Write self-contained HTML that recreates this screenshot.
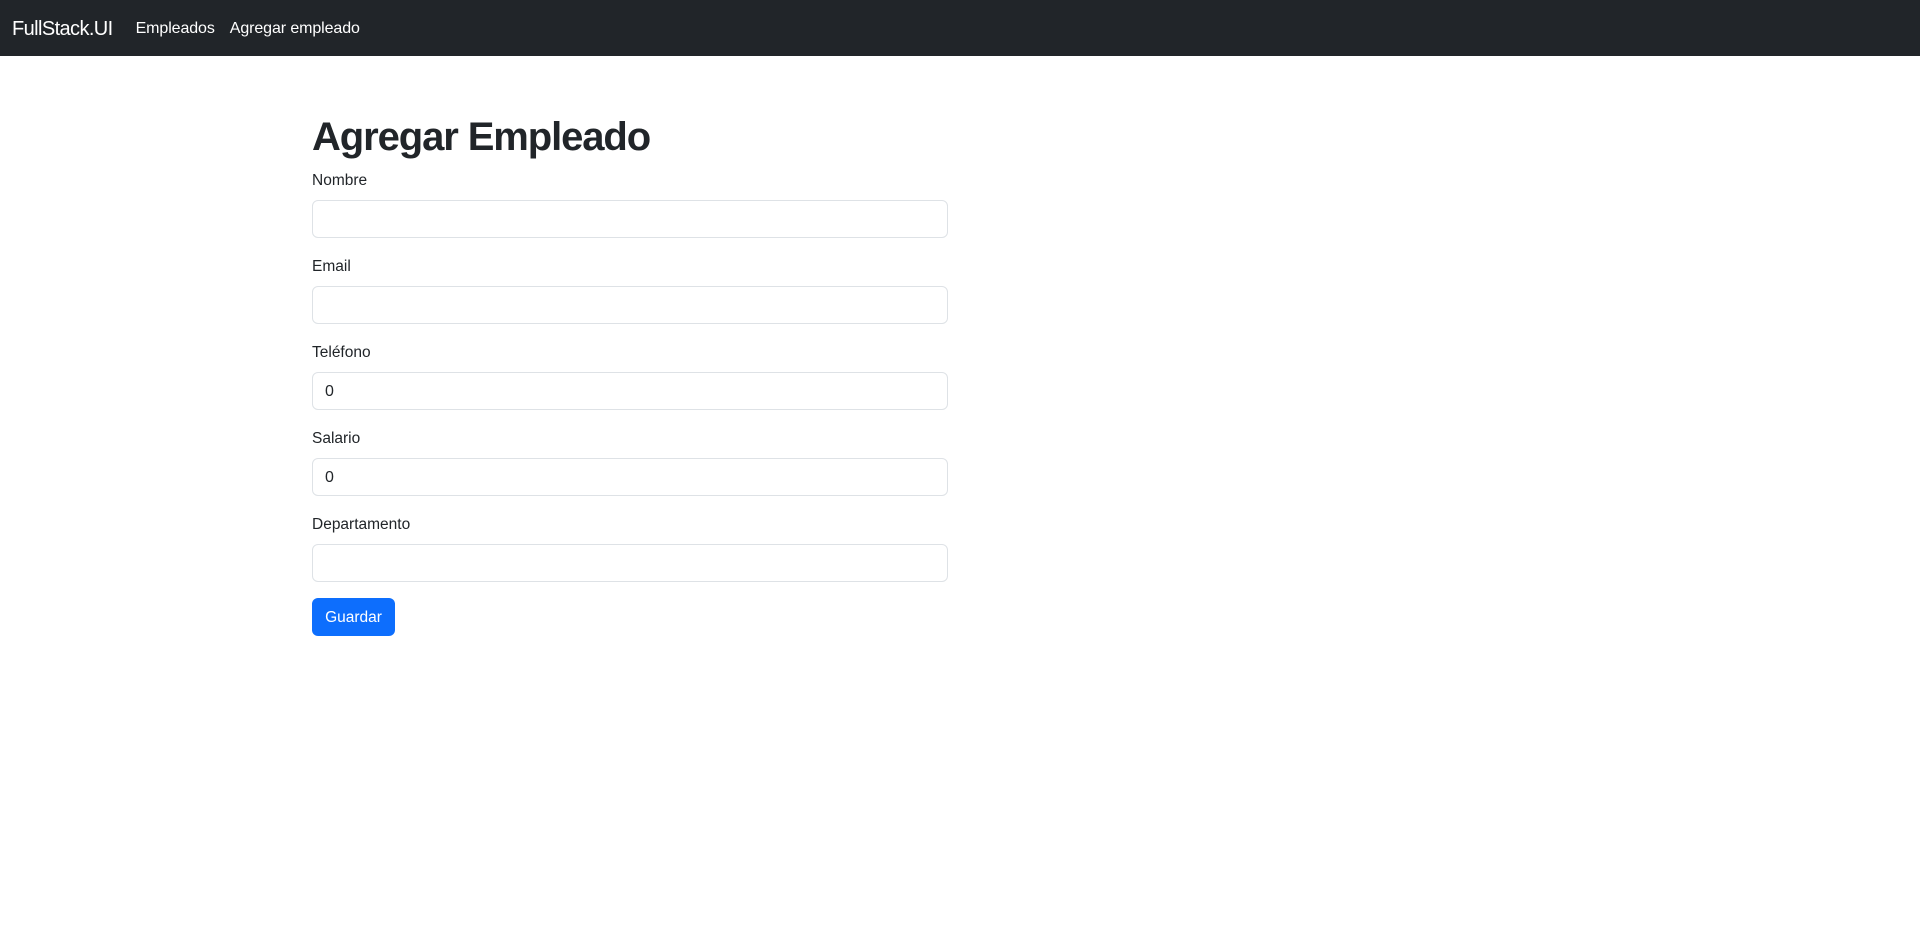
<!DOCTYPE html>
<html><head><meta charset="utf-8"><style>
*{box-sizing:border-box;margin:0;padding:0}
body{font-family:"Liberation Sans",sans-serif;font-size:16px;line-height:1.5;color:#212529;background:#fff;width:1920px;height:929px;overflow:hidden}
nav{height:56px;background:#212529;display:flex;align-items:center;padding-left:12px;padding-top:1px}
.brand{color:#fff;font-size:20px;margin-right:23px;letter-spacing:-0.6px}
nav a{color:#fff;font-size:16px;margin-right:15px;text-decoration:none;letter-spacing:-0.1px}
.wrap{position:absolute;left:312px;top:112px;width:636px}
h1{font-size:40px;font-weight:bold;line-height:48px;margin-bottom:8px;position:relative;top:1px;letter-spacing:-1.1px}
label{display:block;margin-bottom:8px;height:24px;padding-top:1px;font-size:15.5px}
.in{height:38px;border:1px solid #dee2e6;border-radius:6px;margin-bottom:16px;padding:7px 12px 5px;font-size:16px;line-height:24px}
.btn{display:inline-block;background:#0d6efd;color:#fff;border-radius:6px;height:38px;width:83px;line-height:39px;text-align:center;font-size:15.5px}
</style></head><body>
<nav><span class="brand">FullStack.UI</span><a>Empleados</a><a>Agregar empleado</a></nav>
<div class="wrap">
<h1>Agregar Empleado</h1>
<label>Nombre</label><div class="in"></div>
<label>Email</label><div class="in"></div>
<label>Teléfono</label><div class="in">0</div>
<label>Salario</label><div class="in">0</div>
<label>Departamento</label><div class="in"></div>
<div class="btn">Guardar</div>
</div>
</body></html>
